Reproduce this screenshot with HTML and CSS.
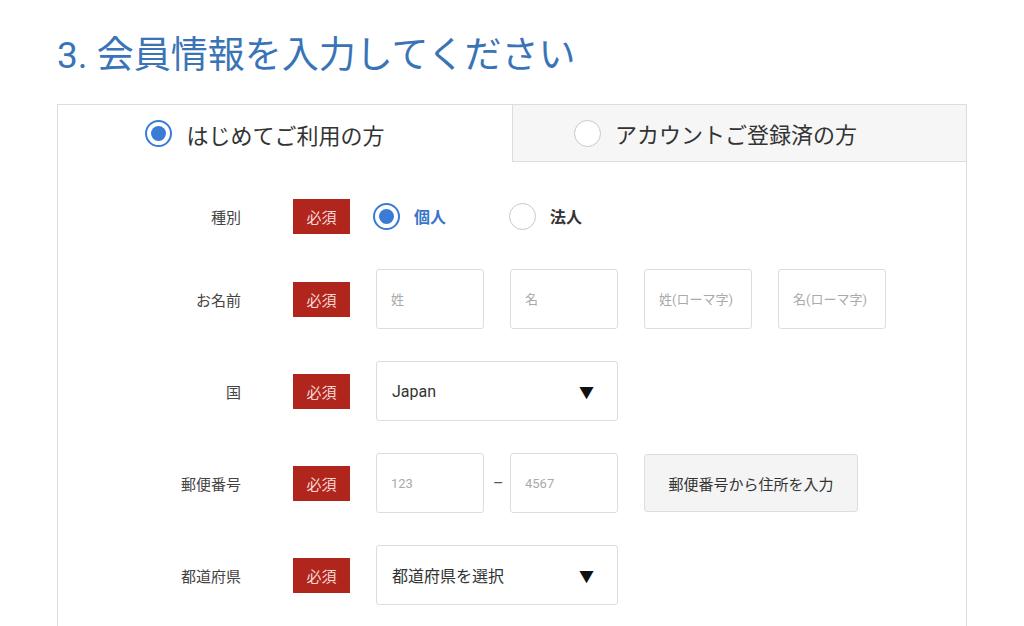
FILE: index.html
```html
<!DOCTYPE html>
<html lang="ja">
<head>
    <meta charset="UTF-8">
    <meta name="viewport" content="width=device-width, initial-scale=1.0">
    <link rel="stylesheet" href="styles.css">
    <title>会員情報入力</title>
</head>
<body>
    <div class="page">
        <h1 class="step-title">3. 会員情報を入力してください</h1>

        <div class="member-card">
            <div class="tabs">
                <div class="tab tab-active">
                    <span class="radio radio-on"></span>
                    <span>はじめてご利用の方</span>
                </div>
                <div class="tab tab-idle">
                    <span class="radio"></span>
                    <span>アカウントご登録済の方</span>
                </div>
            </div>

            <div class="form">
                <div class="row row-short">
                    <div class="label">種別</div>
                    <span class="required">必須</span>
                    <div class="field">
                        <label class="choice choice-on"><span class="radio radio-on"></span>個人</label>
                        <label class="choice"><span class="radio"></span>法人</label>
                    </div>
                </div>

                <div class="row">
                    <div class="label">お名前</div>
                    <span class="required">必須</span>
                    <div class="field">
                        <input class="text-box" type="text" placeholder="姓">
                        <input class="text-box" type="text" placeholder="名">
                        <input class="text-box" type="text" placeholder="姓(ローマ字)">
                        <input class="text-box" type="text" placeholder="名(ローマ字)">
                    </div>
                </div>

                <div class="row">
                    <div class="label">国</div>
                    <span class="required">必須</span>
                    <div class="field">
                        <div class="select-box">
                            <span>Japan</span>
                            <span class="arrow">▼</span>
                        </div>
                    </div>
                </div>

                <div class="row">
                    <div class="label">郵便番号</div>
                    <span class="required">必須</span>
                    <div class="field">
                        <input class="text-box" type="text" placeholder="123">
                        <span class="dash">–</span>
                        <input class="text-box" type="text" placeholder="4567">
                        <button class="zip-btn" type="button">郵便番号から住所を入力</button>
                    </div>
                </div>

                <div class="row">
                    <div class="label">都道府県</div>
                    <span class="required">必須</span>
                    <div class="field">
                        <div class="select-box">
                            <span>都道府県を選択</span>
                            <span class="arrow">▼</span>
                        </div>
                    </div>
                </div>
            </div>
        </div>
    </div>
</body>
</html>
```

FILE: styles.css
```css
body {
  margin: 0;
  background: #ffffff;
  font-family: Roboto, "Noto Sans CJK JP", sans-serif;
  color: #333333;
  overflow: hidden;
}

.page {
  padding: 28px 57px 0 57px;
  width: 910px;
}

.step-title {
  margin: 0 0 20px 0;
  font-size: 37px;
  font-weight: 400;
  line-height: 56px;
  color: #3a74b6;
}

/* card with the two tabs */
.member-card {
  border: 1px solid #dddddd;
  border-bottom: none;
  padding-bottom: 80px;
}

.tabs {
  display: flex;
  height: 57px;
}

.tab {
  box-sizing: border-box;
  width: 50%;
  display: flex;
  align-items: center;
  justify-content: center;
  gap: 14px;
  padding-right: 40px;
  font-size: 22px;
  color: #333333;
}

.tab-active {
  background: #ffffff;
}

.tab-idle {
  background: #f6f6f6;
  border-left: 1px solid #dddddd;
  border-bottom: 1px solid #dddddd;
  padding-right: 48px;
}

.radio {
  box-sizing: border-box;
  width: 27px;
  height: 27px;
  border-radius: 50%;
  border: 1.5px solid #c8c8c8;
  background: #ffffff;
  display: inline-block;
  position: relative;
  flex-shrink: 0;
}

.radio-on {
  border: 2px solid #3a7bd5;
}

.radio-on::after {
  content: "";
  position: absolute;
  left: 4px;
  top: 4px;
  width: 15px;
  height: 15px;
  border-radius: 50%;
  background: #3a7bd5;
}

/* form rows */
.form {
  padding-top: 36px;
  display: flex;
  flex-direction: column;
  gap: 32px;
}

.row {
  display: flex;
  align-items: center;
  min-height: 60px;
}

.row-short {
  min-height: 36px;
  margin-bottom: 3px;
}

.label {
  width: 183px;
  text-align: right;
  font-size: 15px;
  color: #444444;
  margin-right: 52px;
}

.required {
  width: 57px;
  height: 35px;
  display: flex;
  align-items: center;
  justify-content: center;
  background: #b0261d;
  color: #f6d9d6;
  font-size: 15px;
  margin-right: 26px;
}

.field {
  display: flex;
  align-items: center;
  gap: 26px;
}

.choice {
  display: flex;
  align-items: center;
  gap: 14px;
  font-size: 16px;
  font-weight: 700;
  color: #333333;
  width: 110px;
}

.choice-on {
  color: #3a74c8;
  margin-left: -3px;
}

.text-box {
  box-sizing: border-box;
  width: 108px;
  height: 60px;
  border: 1px solid #dddddd;
  border-radius: 3px;
  padding: 0 14px;
  font-family: Roboto, "Noto Sans CJK JP", sans-serif;
  font-size: 13px;
  color: #333333;
  outline: none;
}

.text-box::placeholder {
  color: #aaaaaa;
}

.dash {
  width: 8px;
  margin: 0 -17px;
  text-align: center;
  font-size: 16px;
  color: #555555;
}

.select-box {
  box-sizing: border-box;
  width: 242px;
  height: 60px;
  border: 1px solid #dddddd;
  border-radius: 3px;
  display: flex;
  align-items: center;
  justify-content: space-between;
  padding: 0 23px 0 15px;
  font-size: 16px;
  color: #333333;
}

.arrow {
  font-size: 15px;
  color: #111111;
}

.zip-btn {
  box-sizing: border-box;
  width: 214px;
  height: 58px;
  padding: 0;
  background: #f4f4f4;
  border: 1px solid #dddddd;
  border-radius: 3px;
  font-family: Roboto, "Noto Sans CJK JP", sans-serif;
  font-size: 15px;
  color: #333333;
}
```
